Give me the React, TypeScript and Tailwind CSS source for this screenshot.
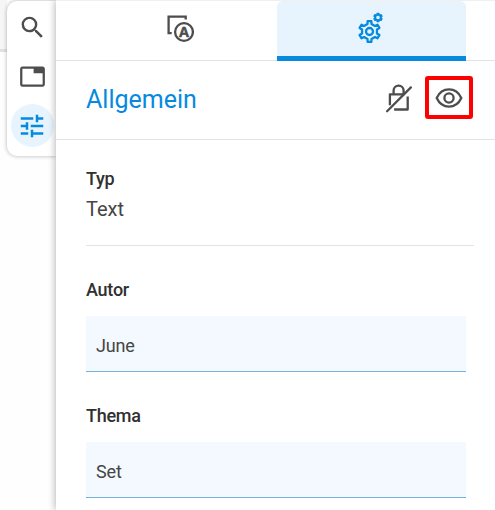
import React from "react";
import { MdSearch, MdTab, MdTune } from "react-icons/md";

function LayoutIcon() {
  return (
    <svg width="30" height="30" viewBox="0 0 30 30" fill="none" stroke="#4d4d4d">
      <path d="M7.7 19.2H4.6V2.6h17.1v2.9" strokeWidth="2.3" />
      <circle cx="20" cy="18" r="8.9" strokeWidth="2.3" />
      <text x="20" y="23.1" textAnchor="middle" fontSize="14.5" fontWeight="700" fill="#4d4d4d" strokeWidth="0.4" fontFamily="Open Sans, sans-serif">A</text>
    </svg>
  );
}

function gear(cx: number, cy: number, outer: number, inner: number, teeth: number) {
  const points: string[] = [];
  const step = (Math.PI * 2) / teeth;
  for (let i = 0; i < teeth; i++) {
    const a = i * step - Math.PI / 2;
    const parts: [number, number][] = [
      [-0.25, inner],
      [-0.17, outer],
      [0.17, outer],
      [0.25, inner],
    ];
    parts.forEach(([f, r]) => {
      points.push(`${(cx + r * Math.cos(a + f * step)).toFixed(2)} ${(cy + r * Math.sin(a + f * step)).toFixed(2)}`);
    });
  }
  return `M${points.join("L")}Z`;
}

function GearsIcon() {
  return (
    <svg width="30" height="32" viewBox="0 0 30 32" fill="none" stroke="#068ade" strokeLinejoin="round">
      <path d={gear(13.5, 19.5, 10.5, 7.7, 6)} strokeWidth="2.3" />
      <circle cx="13.5" cy="19.5" r="3.5" strokeWidth="2.3" />
      <path d={gear(22, 5.5, 3.9, 2.8, 6)} strokeWidth="2" />
    </svg>
  );
}

function UnlockedIcon() {
  return (
    <svg width="28" height="30" viewBox="0 0 28 30" fill="none" stroke="#4d4d4d" strokeWidth="2.3">
      <path d="M4.9 22.2V11.3h14.3M8.6 11V7.6a5 5 0 0 1 10 0v3.2M9.1 26.5h13.6V13.6" strokeLinejoin="round" />
      <path d="M2.1 28.2 25.9 4.4" strokeWidth="2.3" strokeLinecap="round" />
    </svg>
  );
}

function EyeIcon() {
  return (
    <svg width="28" height="20" viewBox="0 0 28 20" fill="none" stroke="#4d4d4d" strokeWidth="2.3">
      <path d="M1.7 10C4.4 4.1 8.8 1.4 14 1.4S23.6 4.1 26.3 10c-2.7 5.9-7.1 8.6-12.3 8.6S4.4 15.9 1.7 10Z" />
      <circle cx="14" cy="10" r="4.6" />
    </svg>
  );
}

function Field({ label, value }: { label: string; value: string }) {
  return (
    <label className="block h-[126px]">
      <span className="block h-[34px] text-[18px] leading-[20px] font-medium tracking-[-0.25px] text-[#303030]">{label}</span>
      <span className="mt-[2px] flex h-14 w-[380px] items-center border-b border-[#74b2dc] bg-[#f3f9fe] px-[10px] pt-[4px] text-[18px] tracking-[-0.15px] text-[#454545]">
        {value}
      </span>
    </label>
  );
}

export default function App() {
  return (
    <div className="flex h-[510px] w-[495px] overflow-hidden bg-[#fefefe] font-['Roboto',sans-serif]">
      <div className="h-[52px] w-[7px] shrink-0 border-b-[3px] border-[#e2e2e2] bg-[#f6f6f6]" />
      <nav className="mt-px flex h-[155px] w-[49px] shrink-0 flex-col gap-[6px] rounded-l-[10px] bg-white pt-[5px] pl-1 text-[#4d4d4d] shadow-[0_0_4px_rgba(0,0,0,0.3)]">
        <button className="flex size-[43px] items-center justify-center pr-px" aria-label="Suche">
          <MdSearch size={29} />
        </button>
        <button className="flex size-[43px] items-center justify-center pr-px" aria-label="Tab">
          <MdTab size={27} />
        </button>
        <button className="flex size-[43px] items-center justify-center rounded-full bg-[#e7f4fe] pr-px text-[#068ade]" aria-label="Einstellungen">
          <MdTune size={30} />
        </button>
      </nav>
      <main className="relative h-[510px] w-[439px] shrink-0 border-t border-[#f0f0f0] bg-white shadow-[-1px_0_7px_rgba(0,0,0,0.28)]">
        <div className="flex h-[60px] border-b border-[#e3e3e3]">
          <button className="flex w-[221px] items-start justify-center pt-[13px] pl-6" aria-label="Darstellung">
            <LayoutIcon />
          </button>
          <button className="flex h-[60px] w-[189px] items-start justify-center rounded-t-[6px] border-b-[5px] border-[#068ade] bg-[#e7f4fe] pt-[11px] pr-px" aria-label="Eigenschaften">
            <GearsIcon />
          </button>
        </div>
        <header className="flex h-[79px] items-start border-b border-[#e3e3e3] pt-[15px] pl-[30px]">
          <h1 className="mt-[9px] w-[299px] text-[25px] leading-[30px] text-[#068ade]">Allgemein</h1>
          <div className="mt-[7px]">
            <UnlockedIcon />
          </div>
          <button className="ml-[11.5px] flex h-[43px] w-[48px] items-center justify-center rounded-[3px] border-4 border-[#ff0000]" aria-label="Sichtbar">
            <EyeIcon />
          </button>
        </header>
        <section className="ml-[30px] h-[106px] w-[388px] border-b border-[#e3e3e3] pt-[29px]">
          <h2 className="text-[18px] leading-[20px] font-medium tracking-[-0.25px] text-[#303030]">Typ</h2>
          <p className="mt-[8px] text-[20px] leading-[24px] text-[#454545]">Text</p>
        </section>
        <section className="ml-[30px] pt-[34px]">
          <Field label="Autor" value="June" />
          <Field label="Thema" value="Set" />
        </section>
      </main>
    </div>
  );
}
